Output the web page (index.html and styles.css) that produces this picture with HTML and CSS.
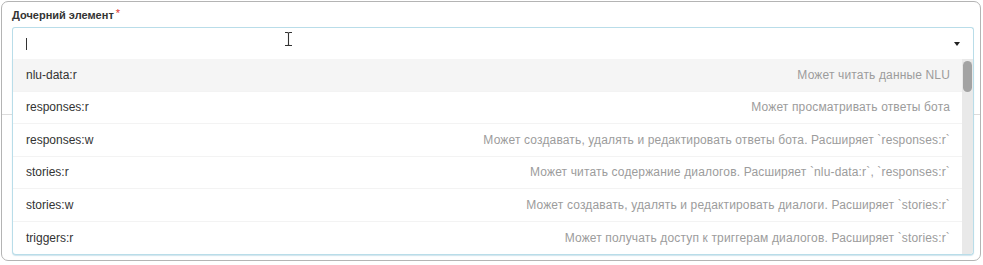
FILE: index.html
```html
<!DOCTYPE html>
<html lang="ru">
<head>
<meta charset="utf-8">
<link rel="stylesheet" href="styles.css">
</head>
<body>
<div class="frame">
  <div class="field">
    <div class="label">Дочерний элемент<span class="req">*</span></div>
    <div class="select">
      <div class="control">
        <span class="text-cursor"></span>
        <span class="caret"></span>
      </div>
      <div class="menu">
        <div class="options">
          <div class="option active"><span class="name">nlu-data:r</span><span class="desc">Может читать данные NLU</span></div>
          <div class="option"><span class="name">responses:r</span><span class="desc">Может просматривать ответы бота</span></div>
          <div class="option"><span class="name">responses:w</span><span class="desc">Может создавать, удалять и редактировать ответы бота. Расширяет `responses:r`</span></div>
          <div class="option"><span class="name">stories:r</span><span class="desc">Может читать содержание диалогов. Расширяет `nlu-data:r`, `responses:r`</span></div>
          <div class="option"><span class="name">stories:w</span><span class="desc">Может создавать, удалять и редактировать диалоги. Расширяет `stories:r`</span></div>
          <div class="option last"><span class="name">triggers:r</span><span class="desc">Может получать доступ к триггерам диалогов. Расширяет `stories:r`</span></div>
        </div>
        <div class="scrollbar"><div class="thumb"></div></div>
      </div>
    </div>
  </div>
  <svg class="ibeam" width="9" height="16" viewBox="0 0 9 16">
    <path d="M1 1.5 H3.5 Q4.5 1.5 4.5 2.5 V13.5 Q4.5 14.5 3.5 14.5 H1 M8 1.5 H5.5 Q4.5 1.5 4.5 2.5 M4.5 13.5 Q4.5 14.5 5.5 14.5 H8" fill="none" stroke="#ffffff" stroke-width="2.6"/>
    <path d="M1 1.5 H3.5 Q4.5 1.5 4.5 2.5 V13.5 Q4.5 14.5 3.5 14.5 H1 M8 1.5 H5.5 Q4.5 1.5 4.5 2.5 M4.5 13.5 Q4.5 14.5 5.5 14.5 H8" fill="none" stroke="#333" stroke-width="1.1"/>
  </svg>
</div>
</body>
</html>
```

FILE: styles.css
```css
html, body {
  margin: 0;
  padding: 0;
  background: #ffffff;
}
body {
  width: 983px;
  height: 265px;
  overflow: hidden;
  font-family: "Liberation Sans", Arial, sans-serif;
}
.frame {
  position: relative;
  box-sizing: border-box;
  margin: 1px 0 0 1px;
  width: 980px;
  height: 260px;
  border: 1px solid #b4b4b4;
  border-radius: 7px;
  background: #fff;
  padding: 7px 0 0 10px;
}
.field {
  box-sizing: border-box;
  height: 106px;
  border-bottom: 1px solid #dcdcdc;
  margin-left: -10px;
  padding-left: 10px;
}
.label {
  font-size: 11px;
  font-weight: bold;
  color: #333;
  line-height: 12px;
  height: 18px;
}
.req {
  color: #e0312b;
  font-weight: normal;
  font-size: 11px;
  vertical-align: top;
  margin-left: 2px;
  position: relative;
  top: -2px;
}
.select {
  position: relative;
  width: 962px;
}
.control {
  box-sizing: border-box;
  height: 32px;
  border: 1px solid #b9dde9;
  border-bottom: none;
  border-radius: 3px 3px 0 0;
  display: flex;
  align-items: center;
  justify-content: space-between;
  padding: 0 13px 0 13px;
}
.text-cursor {
  display: block;
  width: 1px;
  height: 12px;
  background: #333;
}
.caret {
  display: block;
  width: 0;
  height: 0;
  border-left: 3.5px solid transparent;
  border-right: 3.5px solid transparent;
  border-top: 4px solid #222;
}
.menu {
  position: absolute;
  left: 0;
  top: 100%;
  width: 962px;
  box-sizing: border-box;
  height: 196px;
  border: 1px solid #b9dde9;
  border-top: none;
  border-radius: 0 0 4px 4px;
  box-shadow: 0 1px 1px rgba(150, 195, 215, 0.45);
  background: #fff;
  display: flex;
  overflow: hidden;
}
.options {
  flex: 1;
  display: flex;
  flex-direction: column;
}
.option {
  box-sizing: border-box;
  height: 33px;
  display: flex;
  align-items: center;
  justify-content: space-between;
  padding: 0 12px 0 13px;
  border-bottom: 1px solid #f3f3f3;
  font-size: 12px;
}
.option.last {
  border-bottom: none;
}
.option.active {
  background: #f5f5f5;
}
.name {
  color: #333;
}
.desc {
  color: #9c9c9c;
  letter-spacing: 0.15px;
}
.scrollbar {
  width: 11px;
  background: #e9e9e9;
  position: relative;
}
.thumb {
  position: absolute;
  left: 1px;
  top: 2px;
  width: 9px;
  height: 31px;
  border-radius: 5px;
  background: #a3a3a3;
}
.ibeam {
  position: absolute;
  left: 282px;
  top: 29px;
}
```
